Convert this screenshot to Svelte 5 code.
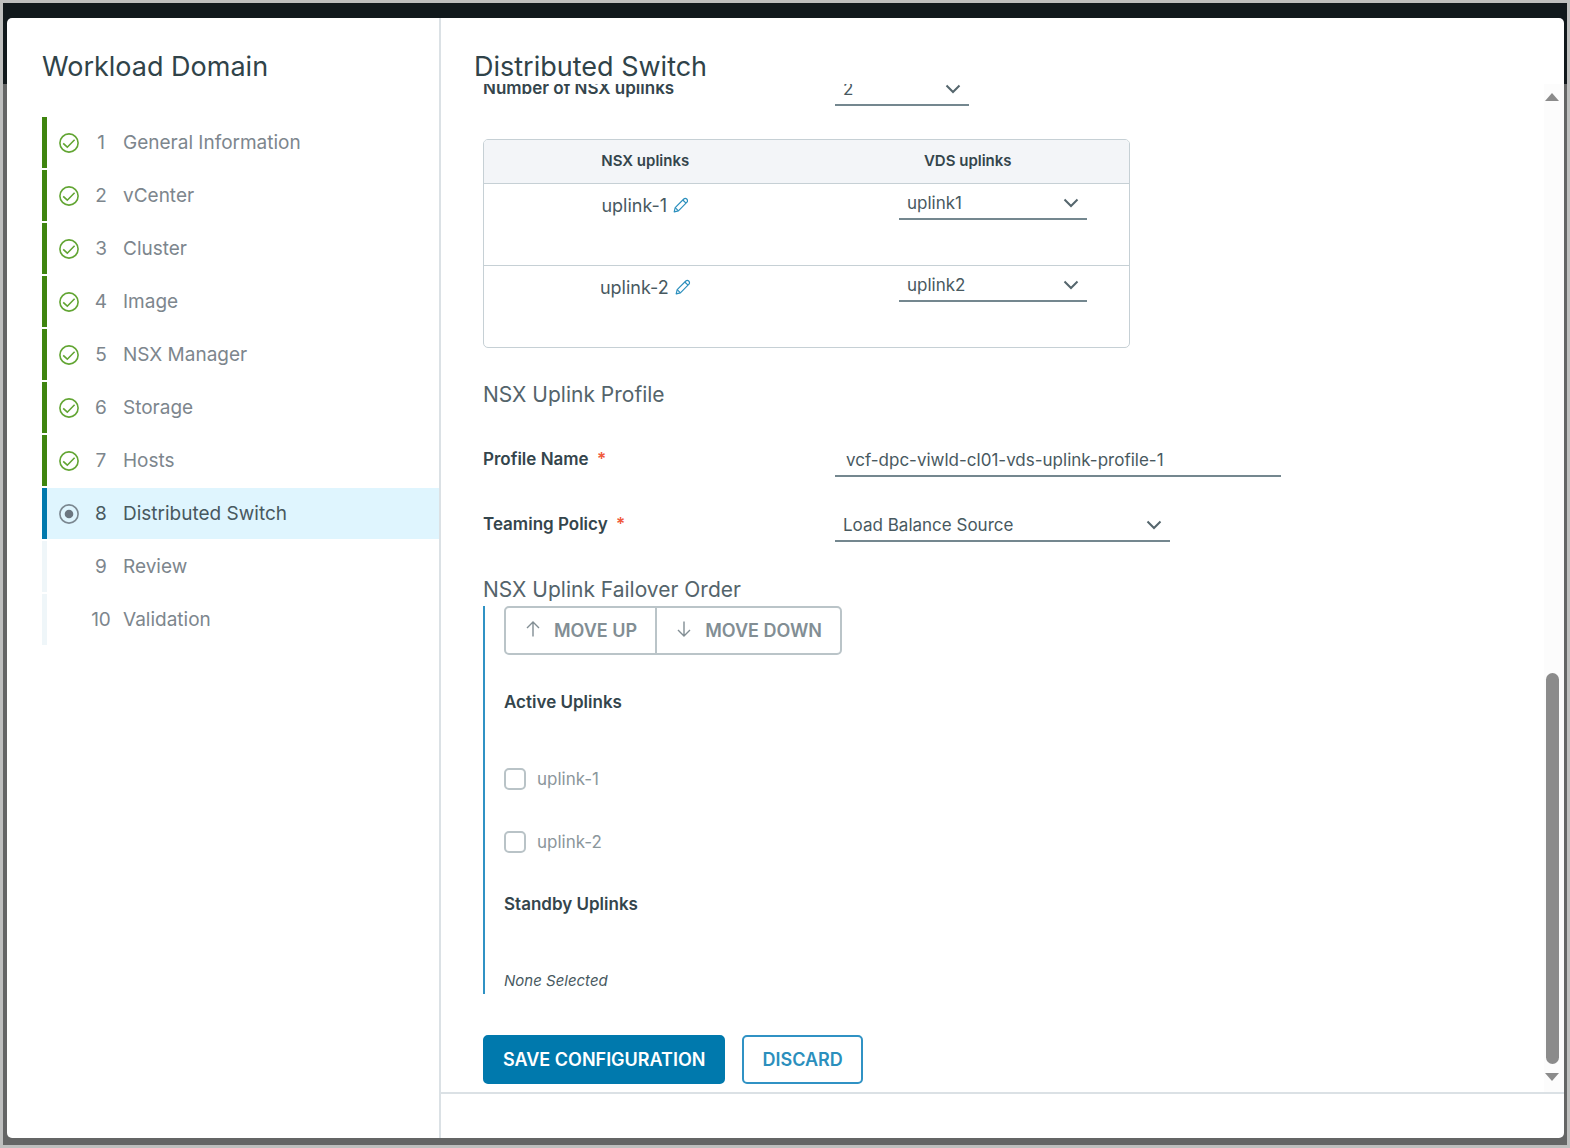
<script lang="ts">
    type Step = { name: string; state: "done" | "current" | "todo" };

    const steps: Step[] = [
        { name: "General Information", state: "done" },
        { name: "vCenter", state: "done" },
        { name: "Cluster", state: "done" },
        { name: "Image", state: "done" },
        { name: "NSX Manager", state: "done" },
        { name: "Storage", state: "done" },
        { name: "Hosts", state: "done" },
        { name: "Distributed Switch", state: "current" },
        { name: "Review", state: "todo" },
        { name: "Validation", state: "todo" },
    ];

    const vdsUplinks = ["uplink1", "uplink2"];

    let uplinkCount = $state("2");
    let mappings = $state([
        { nsx: "uplink-1", vds: "uplink1" },
        { nsx: "uplink-2", vds: "uplink2" },
    ]);
    let profileName = $state("vcf-dpc-viwld-cl01-vds-uplink-profile-1");
    let teamingPolicy = $state("Load Balance Source");
    let selected = $state<string[]>([]);
</script>

{#snippet chevron()}
    <svg class="chevron" viewBox="0 0 16 10" aria-hidden="true"><path d="M1.5 1.5 8 8l6.5-6.5" /></svg>
{/snippet}

<div class="backdrop">
    <div class="wizard">
        <nav class="sidebar">
            <h1 class="title">Workload Domain</h1>
            <ol class="steps">
                {#each steps as step, i}
                    <li class="step {step.state}">
                        <button type="button" class="step-link">
                            <span class="step-icon">
                                {#if step.state === "done"}
                                    <svg viewBox="0 0 20 20" aria-hidden="true">
                                        <circle cx="10" cy="10" r="9.1" />
                                        <path d="M4.2 10.3 8.3 14.2 15.6 6.8" />
                                    </svg>
                                {:else if step.state === "current"}
                                    <svg viewBox="0 0 20 20" aria-hidden="true">
                                        <circle cx="10" cy="10" r="9.1" />
                                        <circle class="dot" cx="10" cy="10" r="4.3" />
                                    </svg>
                                {/if}
                            </span>
                            <span class="step-number">{i + 1}</span>
                            <span>{step.name}</span>
                        </button>
                    </li>
                {/each}
            </ol>
        </nav>

        <main class="page">
            <h2 class="title page-title">Distributed Switch</h2>
            <div class="scroll-area">
                <form class="content" onsubmit={(e) => e.preventDefault()}>
                    <div class="field">
                        <label for="uplink-count">Number of NSX uplinks</label>
                        <div class="select count">
                            <select id="uplink-count" bind:value={uplinkCount}>
                                <option>1</option>
                                <option>2</option>
                            </select>
                            {@render chevron()}
                        </div>
                    </div>

                    <div class="table-wrap">
                        <table>
                            <thead>
                                <tr><th>NSX uplinks</th><th>VDS uplinks</th></tr>
                            </thead>
                            <tbody>
                                {#each mappings as row}
                                    <tr>
                                        <td>
                                            <div class="nsx-name">
                                                {row.nsx}
                                                <button type="button" class="edit" aria-label="Edit {row.nsx}">
                                                    <svg viewBox="0 0 16 16" aria-hidden="true">
                                                        <path d="M1.2 14.8 2.2 10.6 10.8 2Q12.3.6 13.7 2T14 5.2L5.4 13.8Z" />
                                                        <path d="M9.8 3 13 6.2M2.2 10.6 5.4 13.8" />
                                                    </svg>
                                                </button>
                                            </div>
                                        </td>
                                        <td>
                                            <div class="select vds">
                                                <select bind:value={row.vds} aria-label="VDS uplink for {row.nsx}">
                                                    {#each vdsUplinks as name}<option>{name}</option>{/each}
                                                </select>
                                                {@render chevron()}
                                            </div>
                                        </td>
                                    </tr>
                                {/each}
                            </tbody>
                        </table>
                    </div>

                    <h3 class="section">NSX Uplink Profile</h3>
                    <div class="field profile">
                        <label for="profile-name">Profile Name <span class="required">*</span></label>
                        <input id="profile-name" class="text" type="text" bind:value={profileName} />
                    </div>
                    <div class="field teaming">
                        <label for="teaming-policy">Teaming Policy <span class="required">*</span></label>
                        <div class="select policy">
                            <select id="teaming-policy" bind:value={teamingPolicy}>
                                <option>Load Balance Source</option>
                                <option>Failover Order</option>
                            </select>
                            {@render chevron()}
                        </div>
                    </div>

                    <h3 class="section">NSX Uplink Failover Order</h3>
                    <div class="failover">
                        <div class="button-group">
                            <button type="button" disabled={!selected.length}>
                                <svg viewBox="0 0 16 16" aria-hidden="true"><path d="M8 15.5V1M2 7 8 1l6 6" /></svg>
                                MOVE UP
                            </button>
                            <button type="button" disabled={!selected.length}>
                                <svg viewBox="0 0 16 16" aria-hidden="true"><path d="M8 .5V15M2 9 8 15l6-6" /></svg>
                                MOVE DOWN
                            </button>
                        </div>
                        <h4>Active Uplinks</h4>
                        <div class="uplinks">
                            {#each mappings as row}
                                <label class="check">
                                    <input type="checkbox" value={row.nsx} bind:group={selected} />
                                    {row.nsx}
                                </label>
                            {/each}
                        </div>
                        <h4>Standby Uplinks</h4>
                        <p class="none">None Selected</p>
                    </div>

                    <div class="actions">
                        <button type="submit" class="btn primary">SAVE CONFIGURATION</button>
                        <button type="button" class="btn">DISCARD</button>
                    </div>
                </form>

                <div class="scrollbar" aria-hidden="true">
                    <svg viewBox="0 0 14 8"><path d="M7 0 14 8H0Z" /></svg>
                    <div class="track"><div class="thumb"></div></div>
                    <svg viewBox="0 0 14 8"><path d="M0 0H14L7 8Z" /></svg>
                </div>
            </div>
            <footer class="footer"></footer>
        </main>
    </div>
</div>

<style>
    :global(body) { margin: 0; }

    .backdrop { box-sizing: border-box; height: 100vh; min-height: 720px; display: flex; padding: 15px 3px 7px 4px; border: 3px solid #bebfbe; background: linear-gradient(#11191c 81px, #646565 81px); font-family: Inter, "Open Sans", sans-serif; font-size: 17px; color: #48595f; }
    .wizard { flex: 1; min-width: 0; display: flex; background: #fff; border-radius: 5px; overflow: hidden; }
    button, input, select { font: inherit; color: inherit; }

    .sidebar { box-sizing: border-box; width: 434px; flex: none; padding: 32px 0 0 35px; border-right: 2px solid #dbe1e5; }
    .title { margin: 0; font-size: 27px; line-height: 34px; font-weight: 400; color: #304349; }
    .steps { list-style: none; margin: 33px 0 0; padding: 0; display: flex; flex-direction: column; gap: 2px; }
    .step { border-left: 5px solid #3f850f; }
    .step.current { border-color: #0079ad; background: #dff5fe; color: #48595f; }
    .step.todo { border-color: #eff6f9; }
    .step-link { width: 100%; height: 51px; display: flex; align-items: center; padding: 0 0 0 12px; border: 0; background: none; font-size: 19px; line-height: 24px; color: #7d868d; text-align: left; cursor: pointer; }
    .current .step-link { color: #48595f; }
    .step-icon { width: 20px; height: 20px; }
    .step-icon svg { display: block; fill: none; stroke: #62a533; stroke-width: 1.6; }
    .current .step-icon svg { stroke: #7b8790; }
    .current .step-icon .dot { fill: #6b7680; stroke: none; }
    .step-number { width: 44px; text-align: center; }

    .page { flex: 1; min-width: 0; display: flex; flex-direction: column; }
    .page-title { flex: none; height: 34px; padding: 32px 33px 0; }
    /* the form is scrolled to its end, so the rows above run under the title */
    .scroll-area { flex: 1; min-height: 0; display: flex; align-items: stretch; overflow: hidden; }
    .content { flex: 1; min-width: 0; display: flex; flex-direction: column; justify-content: flex-end; padding: 0 42px 8px; }
    .content > * { flex: none; }
    .footer { flex: none; height: 44px; border-top: 2px solid #dbe1e5; }

    .field { display: flex; align-items: center; height: 34px; }
    .field > label { width: 352px; padding-bottom: 2px; font-weight: 600; font-size: 17px; color: #34454c; }
    .profile { margin-top: 34px; }
    .teaming { margin-top: 31px; }
    .required { margin-left: 4px; color: #f05a3c; }

    .select { display: grid; align-items: center; }
    .select > :global(*) { grid-area: 1 / 1; }
    .select select { appearance: none; box-sizing: border-box; width: 100%; height: 34px; padding: 2px 40px 0 8px; border: 0; border-bottom: 2px solid #74878f; border-radius: 0; background: none; }
    .chevron { justify-self: end; width: 16px; height: 10px; margin-right: 8px; fill: none; stroke: #55666d; stroke-width: 2; pointer-events: none; }
    .count { width: 134px; }
    .policy { width: 335px; }
    .vds { width: 188px; margin: 2px 42px 0 auto; }
    .text { box-sizing: border-box; width: 446px; height: 34px; padding: 2px 11px 0; border: 0; border-bottom: 2px solid #74878f; background: none; }

    .table-wrap { box-sizing: border-box; width: 647px; margin-top: 33px; border: 1px solid #c6d0d5; border-radius: 5px; overflow: hidden; }
    table { width: 100%; border-collapse: collapse; table-layout: fixed; }
    th { height: 44px; padding: 0 0 2px; box-sizing: border-box; background: #f3f5f8; font-size: 15px; font-weight: 600; color: #34454c; }
    td { height: 81px; padding: 0; border-top: 1px solid #c6d0d5; vertical-align: top; }
    .nsx-name { display: flex; justify-content: center; align-items: center; gap: 6px; height: 42px; font-size: 18px; }
    .edit { padding: 0; border: 0; background: none; cursor: pointer; }
    .edit svg { display: block; width: 16px; height: 16px; fill: none; stroke: #2b8fbd; stroke-width: 1.2; stroke-linejoin: round; }

    .section { margin: 34px 0 0; font-size: 21px; line-height: 28px; font-weight: 400; color: #54646b; }
    .table-wrap + .section { margin-top: 33px; }
    .failover { margin-top: 2px; padding: 0 0 1px 19px; border-left: 2px solid #3092c4; }
    .button-group { display: flex; width: fit-content; border: 2px solid #bac4c8; border-radius: 5px; }
    .button-group button { display: flex; align-items: center; gap: 13px; height: 45px; padding: 0 18px 0 19px; border: 0; background: none; font-size: 18px; font-weight: 600; color: #828e94; }
    .button-group button + button { border-left: 2px solid #bac4c8; }
    .button-group svg { width: 16px; height: 16px; margin-bottom: 4px; fill: none; stroke: #828e94; stroke-width: 1.4; }
    h4 { margin: 35px 0 0; font-size: 17px; line-height: 24px; font-weight: 600; color: #34454c; }
    .uplinks { display: flex; flex-direction: column; gap: 41px; margin: 54px 0 39px; }
    .uplinks + h4 { margin-top: 0; }
    .check { display: flex; align-items: center; gap: 11px; width: fit-content; height: 22px; color: #8b969b; }
    .check input { appearance: none; box-sizing: border-box; width: 22px; height: 22px; margin: 0; border: 2px solid #b9c3c7; border-radius: 5px; }
    .none { margin: 53px 0 0; font-size: 15px; line-height: 24px; font-style: italic; }
    .actions { display: flex; gap: 17px; margin-top: 41px; }
    .btn { height: 49px; padding: 0 18px; border: 2px solid #3092c4; border-radius: 5px; background: #fff; font-size: 18px; font-weight: 600; color: #2b8fbd; cursor: pointer; }
    .btn.primary { border-color: #0079ad; background: #0079ad; color: #fff; }

    .scrollbar { box-sizing: border-box; flex: none; width: 20px; display: flex; flex-direction: column; align-items: center; gap: 9px; padding: 9px 4px 11px 0; background: #fcfcfc; }
    .scrollbar svg { flex: none; width: 14px; height: 8px; fill: #8b8b8b; }
    .track { flex: 1; width: 13px; display: flex; flex-direction: column; justify-content: flex-end; }
    .thumb { height: 41%; border-radius: 7px; background: #8b8b8b; }
</style>
